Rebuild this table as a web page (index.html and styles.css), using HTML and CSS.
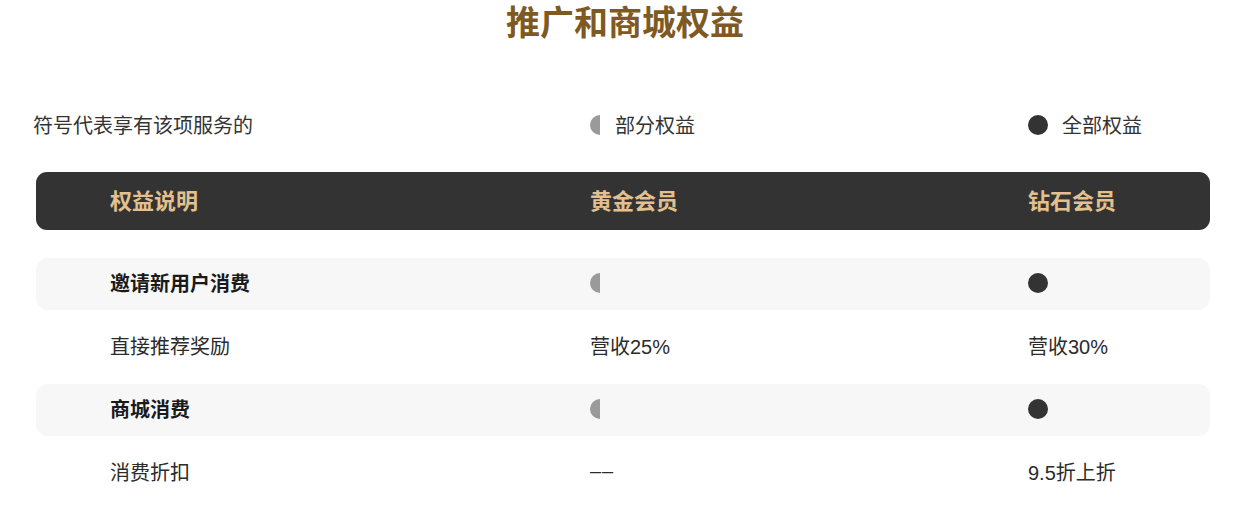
FILE: index.html
```html
<!DOCTYPE html>
<html lang="zh-CN">
<head>
<meta charset="utf-8">
<title>推广和商城权益</title>
<link rel="stylesheet" href="styles.css">
</head>
<body>
<h1 class="title">推广和商城权益</h1>
<div class="legend">
  <span class="legend-label">符号代表享有该项服务的</span>
  <span class="legend-item"><i class="dot half"></i>部分权益</span>
  <span class="legend-item"><i class="dot full"></i>全部权益</span>
</div>
<div class="table">
  <div class="row head">
    <span>权益说明</span><span>黄金会员</span><span>钻石会员</span>
  </div>
  <div class="row group">
    <span class="label">邀请新用户消费</span><span><i class="dot half"></i></span><span><i class="dot full"></i></span>
  </div>
  <div class="row">
    <span>直接推荐奖励</span><span>营收25%</span><span>营收30%</span>
  </div>
  <div class="row group">
    <span class="label">商城消费</span><span><i class="dot half"></i></span><span><i class="dot full"></i></span>
  </div>
  <div class="row">
    <span>消费折扣</span><span class="dash">––</span><span>9.5折上折</span>
  </div>
</div>
</body>
</html>
```
FILE: styles.css
```css
* { box-sizing: border-box; }
body {
  margin: 0;
  background: #fff;
  font-family: "Liberation Sans", "Noto Sans CJK SC", sans-serif;
  color: #2b2b2b;
}
.title {
  margin: 0;
  height: 48px;
  line-height: 46px;
  text-align: center;
  font-size: 34px;
  font-weight: 700;
  color: #7e5a22;
}
.legend {
  margin-top: 58px;
  height: 40px;
  padding-bottom: 3px;
  padding-left: 33px;
  display: grid;
  grid-template-columns: 557px 438px 1fr;
  align-items: center;
  font-size: 20px;
  color: #333;
}
.legend-item {
  display: flex;
  align-items: center;
}
.legend .half { margin-right: 15px; }
.legend .full { margin-right: 14px; }
.dot {
  display: inline-block;
  vertical-align: middle;
  height: 20px;
}
.dot.half {
  width: 10px;
  border-radius: 10px 0 0 10px;
  background: #9a9a9a;
}
.dot.full {
  width: 20px;
  border-radius: 50%;
  background: #333;
}
.table {
  margin: 26px 40px 0 36px;
  display: flex;
  flex-direction: column;
  gap: 11px;
}
.row {
  display: grid;
  grid-template-columns: 480px 438px 1fr;
  align-items: center;
  padding-left: 74px;
  padding-bottom: 3px;
  height: 52px;
  border-radius: 12px;
  font-size: 20px;
  color: #2b2b2b;
}
.row > span { display: flex; align-items: center; }
.row.head {
  height: 58px;
  padding-bottom: 4px;
  border-radius: 11px;
  background: #333;
  color: #e2c18e;
  font-size: 22px;
  font-weight: 600;
  margin-bottom: 17px;
}
.row.group { background: #f7f7f7; }
.label { font-weight: 600; color: #1a1a1a; }
.dash { letter-spacing: 1px; }
```
